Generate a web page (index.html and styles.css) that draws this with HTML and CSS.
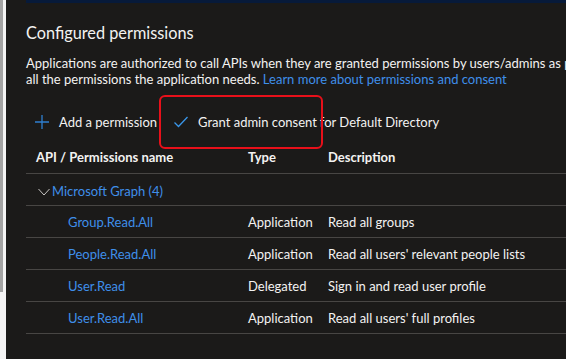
FILE: index.html
```
<!DOCTYPE html>
<html lang="en">
<head>
    <meta charset="UTF-8">
    <meta name="viewport" content="width=device-width, initial-scale=1.0">
    <title>API permissions</title>
    <link rel="stylesheet" href="styles.css">
</head>
<body>
    <div class="page">
        <div class="edge"><div class="thumb"></div></div>

        <div class="main">
            <div class="banner"></div>

            <h2>Configured permissions</h2>
            <p class="intro">
                <span class="line">Applications are authorized to call APIs when they are granted permissions by users/admins as part of the consent process. The list of configured permissions should include</span><br>
                <span class="line">all the permissions the application needs. <a href="#">Learn more about permissions and consent</a></span>
            </p>

            <div class="toolbar">
                <button class="tool">
                    <svg class="icon" viewBox="0 0 16 16" width="16" height="16">
                        <path d="M8 1v14M1 8h14" stroke="#2f7fd0" stroke-width="1.3" fill="none"/>
                    </svg>
                    Add a permission
                </button>
                <button class="tool consent">
                    <span class="highlight">
                        <svg class="icon" viewBox="0 0 16 16" width="16" height="16">
                            <path d="M1.5 8.5l4 4L14.5 3" stroke="#3a96e8" stroke-width="1.3" fill="none"/>
                        </svg>
                        Grant admin consent
                    </span>
                    for Default Directory
                </button>
            </div>

            <table class="perms">
                <thead>
                    <tr>
                        <th class="col-name">API / Permissions name</th>
                        <th class="col-type">Type</th>
                        <th>Description</th>
                    </tr>
                </thead>
                <tbody>
                    <tr class="group">
                        <td colspan="3">
                            <svg class="chevron" viewBox="0 0 12 8" width="12" height="8">
                                <path d="M0.5 1l5.5 6 5.5-6" stroke="#c8c6c4" stroke-width="1" fill="none"/>
                            </svg><a href="#">Microsoft Graph (4)</a>
                        </td>
                    </tr>
                    <tr>
                        <td class="perm"><a href="#">Group.Read.All</a></td>
                        <td>Application</td>
                        <td>Read all groups</td>
                    </tr>
                    <tr>
                        <td class="perm"><a href="#">People.Read.All</a></td>
                        <td>Application</td>
                        <td>Read all users' relevant people lists</td>
                    </tr>
                    <tr>
                        <td class="perm"><a href="#">User.Read</a></td>
                        <td>Delegated</td>
                        <td>Sign in and read user profile</td>
                    </tr>
                    <tr>
                        <td class="perm"><a href="#">User.Read.All</a></td>
                        <td>Application</td>
                        <td>Read all users' full profiles</td>
                    </tr>
                </tbody>
            </table>
        </div>
    </div>
</body>
</html>
```

FILE: styles.css
```
* {
    margin: 0;
    padding: 0;
    box-sizing: border-box;
}

html, body {
    height: 100%;
    overflow: hidden;
}

body {
    font-family: "Segoe UI", Lato, sans-serif;
    font-size: 13px;
    color: #f3f2f1;
    background-color: #1b1a19;
}

.page {
    display: flex;
    height: 100%;
}

.edge {
    width: 6px;
    flex: none;
    background-color: #f4f4f4;
}

.thumb {
    width: 3px;
    height: 292px;
    background-color: #a3a3a3;
}

.main {
    flex: 1;
    min-width: 0;
    padding-left: 20px;
    background-color: #1b1a19;
}

.banner {
    height: 3px;
    background-color: #071a3a;
}

h2 {
    margin-top: 19px;
    font-size: 16.3px;
    font-weight: 400;
    line-height: 22px;
}

a {
    color: #3f8fea;
    text-decoration: none;
}

.intro {
    margin-top: 11px;
    line-height: 16px;
    white-space: nowrap;
}

.toolbar {
    display: flex;
    margin-top: 17px;
    height: 36px;
    align-items: center;
}

.tool {
    display: flex;
    align-items: center;
    gap: 9px;
    padding: 0 8px;
    background: none;
    border: none;
    color: #f3f2f1;
    font: inherit;
    height: 36px;
    cursor: pointer;
}

.tool.consent {
    gap: 3px;
}

.tool .icon {
    flex: none;
}

.highlight {
    position: relative;
    display: flex;
    align-items: center;
    gap: 9px;
}

.highlight::after {
    content: "";
    position: absolute;
    left: -14px;
    right: -6px;
    top: -19px;
    bottom: -19px;
    border: 2px solid #e8101a;
    border-radius: 6px;
}

.perms {
    width: 1000px;
    border-collapse: collapse;
    margin-top: 1px;
}

.perms th,
.perms td {
    height: 32px;
    padding: 2px 10px 0;
    text-align: left;
    border-bottom: 1px solid #484644;
    white-space: nowrap;
}

.perms th {
    font-weight: 700;
    padding-top: 0;
}

.perms th:nth-child(2),
.perms td:nth-child(2) {
    padding-right: 0;
}

.col-name {
    width: 212px;
}

.col-type {
    width: 80px;
}

.perms td.perm {
    padding-left: 42px;
}

.group td {
    padding-left: 12px;
    padding-top: 3px;
}

.chevron {
    margin-right: 2px;
}
```
